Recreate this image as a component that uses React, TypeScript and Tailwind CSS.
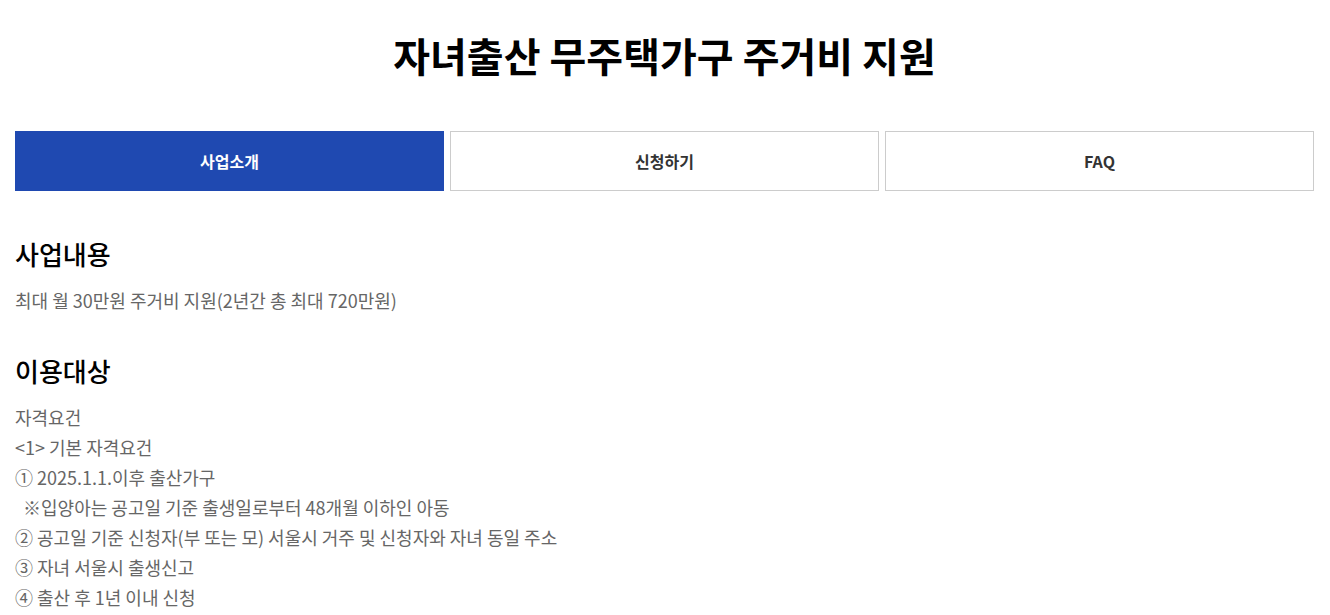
const TABS = ["사업소개", "신청하기", "FAQ"];

const TARGET_LINES = [
  "자격요건",
  "<1> 기본 자격요건",
  "① 2025.1.1.이후 출산가구",
  "\u00a0\u00a0※입양아는 공고일 기준 출생일로부터 48개월 이하인 아동",
  "② 공고일 기준 신청자(부 또는 모) 서울시 거주 및 신청자와 자녀 동일 주소",
  "③ 자녀 서울시 출생신고",
  "④ 출산 후 1년 이내 신청",
];

export default function App() {
  return (
    <div
      className="min-h-screen bg-white pl-[15px] pr-[16px]"
      style={{ fontFamily: '"Noto Sans CJK KR", "Noto Sans", sans-serif' }}
    >
      <h1 className="pt-[26px] text-center text-[40px] font-bold leading-[58px] text-black">
        자녀출산 무주택가구 주거비 지원
      </h1>

      <div className="mt-[47px] grid grid-cols-3 gap-[6px]">
        {TABS.map((t, i) =>
          i === 0 ? (
            <button
              key={t}
              className="h-[60px] bg-[#1f49b1] text-[16px] font-bold text-white"
            >
              {t}
            </button>
          ) : (
            <button
              key={t}
              className="h-[60px] border border-[#cccccc] bg-white text-[16px] font-bold text-[#333]"
            >
              {t}
            </button>
          )
        )}
      </div>

      <section className="mt-[44px]">
        <h2 className="text-[26px] font-medium leading-[38px] text-black">사업내용</h2>
        <p className="mt-[12px] text-[18px] leading-[30px] text-[#666]">
          최대 월 30만원 주거비 지원(2년간 총 최대 720만원)
        </p>
      </section>

      <section className="mt-[37px]">
        <h2 className="text-[26px] font-medium leading-[38px] text-black">이용대상</h2>
        <div className="mt-[12px] text-[18px] leading-[30px] text-[#666]">
          {TARGET_LINES.map((l) => (
            <p key={l}>{l}</p>
          ))}
        </div>
      </section>
    </div>
  );
}
